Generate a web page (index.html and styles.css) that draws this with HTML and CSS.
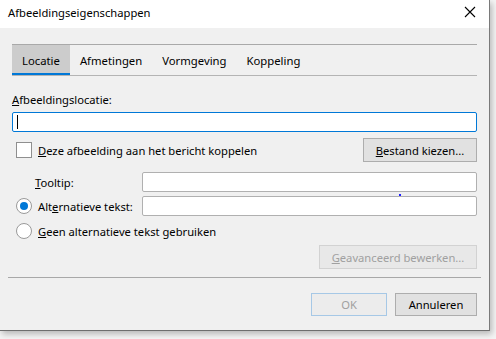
FILE: index.html
```html
<!DOCTYPE html>
<html lang="nl">
<head>
  <meta charset="UTF-8">
  <title>Afbeeldingseigenschappen</title>
  <link rel="stylesheet" href="styles.css">
</head>
<body>
  <div class="dialog">
    <div class="titlebar">
      <span class="title">Afbeeldingseigenschappen</span>
      <svg class="close" width="12" height="12" viewBox="0 0 12 12">
        <path d="M1 1 L11 11 M11 1 L1 11" stroke="#000" stroke-width="1.1" fill="none"/>
      </svg>
    </div>

    <div class="content">
      <div class="tabs">
        <div class="tab active">Locatie</div>
        <div class="tab">Afmetingen</div>
        <div class="tab">Vormgeving</div>
        <div class="tab">Koppeling</div>
      </div>

      <div class="pane">
        <div class="label"><u>A</u>fbeeldingslocatie:</div>
        <div class="input focused"><span class="caret"></span></div>

        <div class="row attach">
          <span class="check"></span>
          <span class="grow"><u>D</u>eze afbeelding aan het bericht koppelen</span>
          <button class="btn browse"><u>B</u>estand kiezen...</button>
        </div>

        <div class="row field tooltip">
          <span class="field-label indent"><u>T</u>ooltip:</span>
          <div class="input"></div>
        </div>

        <div class="row field alt">
          <span class="radio checked"></span>
          <span class="field-label">Alt<u>e</u>rnatieve tekst:</span>
          <div class="input"></div>
          <span class="dot"></span>
        </div>

        <div class="row noalt">
          <span class="radio"></span>
          <span><u>G</u>een alternatieve tekst gebruiken</span>
        </div>

        <div class="row advanced">
          <button class="btn disabled wide"><u>G</u>eavanceerd bewerken...</button>
        </div>
      </div>

      <div class="separator"></div>

      <div class="footer">
        <button class="btn ok disabled">OK</button>
        <button class="btn cancel">Annuleren</button>
      </div>
    </div>
  </div>
</body>
</html>
```

FILE: styles.css
```css
body {
  margin: 0;
  width: 496px;
  height: 339px;
  overflow: hidden;
  background: #f4f4f4;
  font-family: 'Noto Sans', sans-serif;
  font-size: 11.2px;
  color: #000;
}
.dialog {
  width: 490px;
  height: 331px;
  box-sizing: border-box;
  background: #f0f0f0;
  border-right: 1px solid #7a7a7a;
  border-bottom: 1px solid #6e6e6e;
  box-shadow: 2px 3px 6px rgba(0,0,0,0.25);
  position: relative;
}
.titlebar {
  height: 28px;
  background: #fff;
  display: flex;
  align-items: center;
  justify-content: space-between;
  padding: 0 8px;
  font-size: 11.2px;
}
.title {
  margin-top: -4px;
}
.close {
  margin-right: 5px;
  margin-top: -4px;
}
.content {
  padding: 16px 12px 0 12px;
}
.tabs {
  display: flex;
  height: 30px;
  border-top: 1px solid #a9a9a9;
  border-bottom: 1px solid #b4b4b4;
  font-size: 11.3px;
}
.tab {
  padding: 0 10px;
  display: flex;
  align-items: center;
  box-sizing: border-box;
  height: 30px;
}
.tab.active {
  background: #cccccc;
  border-bottom: 2px solid #0078d7;
  padding-top: 2px;
}
.pane {
  display: flex;
  flex-direction: column;
}
.label {
  margin-top: 16px;
  line-height: 16px;
}
.input {
  height: 20px;
  box-sizing: border-box;
  background: #fff;
  border: 1px solid #b0b0b0;
  border-radius: 2px;
}
.input.focused {
  margin-top: 4px;
  border-color: #0078d7;
  display: flex;
  align-items: center;
  padding-left: 4px;
}
.caret {
  width: 1px;
  height: 14px;
  background: #000;
}
.row {
  display: flex;
  align-items: center;
  position: relative;
}
.grow {
  flex: 1;
}
.attach {
  margin-top: 6px;
  height: 24px;
}
.check {
  width: 16px;
  height: 16px;
  box-sizing: border-box;
  border: 1px solid #8f8f8f;
  background: #fff;
  margin: 0 6px 0 4px;
}
.radio {
  width: 16px;
  height: 16px;
  box-sizing: border-box;
  border: 1px solid #9a9a9a;
  border-radius: 50%;
  background: #fff;
  margin: 0 6px 0 4px;
  display: flex;
  align-items: center;
  justify-content: center;
}
.radio.checked::after {
  content: '';
  width: 8px;
  height: 8px;
  border-radius: 50%;
  background: #0078d7;
}
.field {
  height: 20px;
}
.field .input {
  flex: 1;
}
.field-label {
  width: 104px;
}
.indent {
  padding-left: 23px;
  width: 107px;
}
.tooltip {
  margin-top: 10px;
}
.alt {
  margin-top: 4px;
}
.dot {
  position: absolute;
  left: 387px;
  top: -2px;
  width: 2px;
  height: 2px;
  background: #2020ff;
}
.noalt {
  margin-top: 7px;
  height: 16px;
}
.advanced {
  margin-top: 6px;
  justify-content: flex-end;
}
.btn {
  font: inherit;
  color: #000;
  height: 24px;
  box-sizing: border-box;
  background: #e1e1e1;
  border: 1px solid #adadad;
  padding: 0;
}
.browse {
  width: 114px;
}
.wide {
  width: 158px;
}
.btn.disabled {
  background: #e8e8e8;
  border-color: #d2d2d2;
  color: #a0a0a0;
}
.separator {
  margin: 8px -4px 0 -4px;
  border-top: 1px solid #a8a8a8;
}
.footer {
  display: flex;
  justify-content: flex-end;
  gap: 8px;
  margin-top: 15px;
}
.footer .btn {
  height: 23px;
}
.ok {
  width: 76px;
}
.btn.ok.disabled {
  border-color: #a6c8e6;
  background: #ececec;
}
.cancel {
  width: 82px;
}
```
